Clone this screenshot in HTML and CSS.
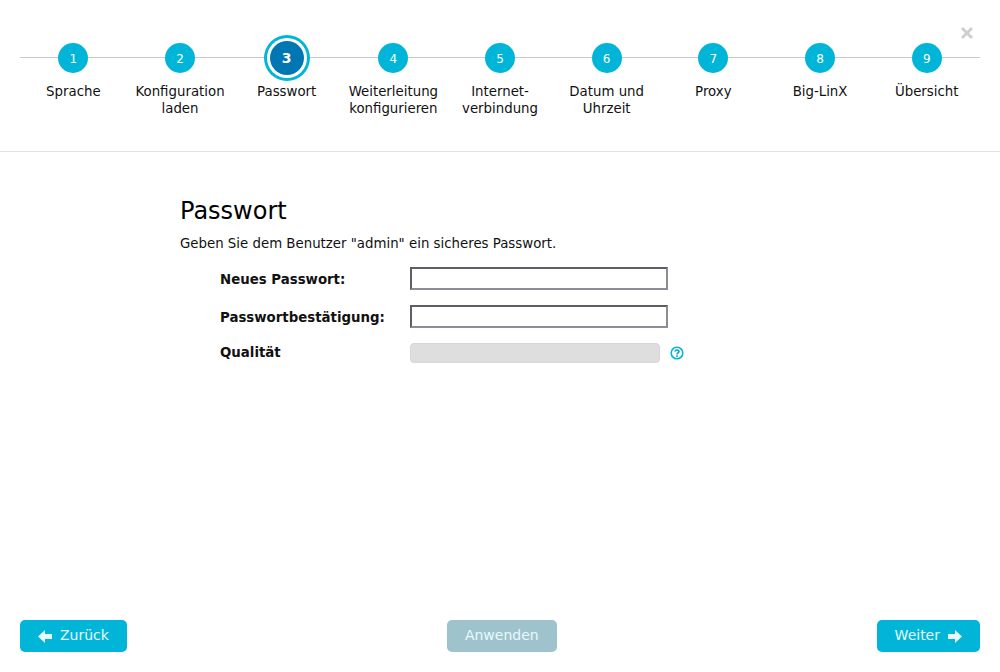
FILE: index.html
```html
<!DOCTYPE html>
<html>
<head>
    <link rel="stylesheet" href="styles.css">
</head>
<body>
    <div class="wizard">
        <div class="header">
            <span class="close">
                <svg width="14" height="14" viewBox="0 0 14 14"><path d="M2 2 L12 12 M12 2 L2 12" stroke="#cfcfcf" stroke-width="3"/></svg>
            </span>
            <div class="steps">
                <div class="step"><div class="circle">1</div><div class="label">Sprache</div></div>
                <div class="step"><div class="circle">2</div><div class="label">Konfiguration<br>laden</div></div>
                <div class="step current"><div class="circle">3</div><div class="label">Passwort</div></div>
                <div class="step"><div class="circle">4</div><div class="label">Weiterleitung<br>konfigurieren</div></div>
                <div class="step"><div class="circle">5</div><div class="label">Internet-<br>verbindung</div></div>
                <div class="step"><div class="circle">6</div><div class="label">Datum und<br>Uhrzeit</div></div>
                <div class="step"><div class="circle">7</div><div class="label">Proxy</div></div>
                <div class="step"><div class="circle">8</div><div class="label">Big-LinX</div></div>
                <div class="step"><div class="circle">9</div><div class="label">Übersicht</div></div>
            </div>
        </div>

        <div class="content">
            <h1>Passwort</h1>
            <p class="intro">Geben Sie dem Benutzer "admin" ein sicheres Passwort.</p>
            <div class="form">
                <label class="form-label">Neues Passwort:</label>
                <input class="field" type="password">
                <label class="form-label">Passwortbestätigung:</label>
                <input class="field" type="password">
                <label class="form-label quality-label">Qualität</label>
                <div class="quality">
                    <div class="quality-bar"></div>
                    <svg class="help" width="14" height="14" viewBox="0 0 14 14">
                        <circle cx="7" cy="7" r="5.8" fill="none" stroke="#00b5d8" stroke-width="1.6"/>
                        <path d="M5 5.6 C5 3.4 9 3.4 9 5.5 C9 7 7 6.8 7 8.4" fill="none" stroke="#00a5c8" stroke-width="1.6"/>
                        <rect x="6.2" y="9.3" width="1.6" height="1.6" fill="#00a5c8"/>
                    </svg>
                </div>
            </div>
        </div>

        <div class="footer">
            <button class="btn">
                <svg class="arrow" width="14" height="13" viewBox="0 0 14 13"><path d="M0 6.5 L7 0 V4 H14 V9 H7 V13 Z" fill="#e8f9fc"/></svg>
                Zurück
            </button>
            <button class="btn disabled">Anwenden</button>
            <button class="btn">
                Weiter
                <svg class="arrow" width="14" height="13" viewBox="0 0 14 13"><path d="M14 6.5 L7 0 V4 H0 V9 H7 V13 Z" fill="#e8f9fc"/></svg>
            </button>
        </div>
    </div>
</body>
</html>
```

FILE: styles.css
```css
* {
    box-sizing: border-box;
}

body {
    font-family: "DejaVu Sans", sans-serif;
    font-size: 13.33px;
    margin: 0;
    background: white;
    color: #111;
}

.wizard {
    display: flex;
    flex-direction: column;
    height: 672px;
}

.header {
    position: relative;
    height: 152px;
    padding: 43px 20px 0;
    border-bottom: 1px solid #e2e2e2;
}

.close {
    position: absolute;
    top: 26px;
    right: 26px;
    line-height: 0;
}

.steps {
    position: relative;
    display: flex;
}

.steps::before {
    content: "";
    position: absolute;
    left: 0;
    right: 0;
    top: 14px;
    height: 1px;
    background: #c8c8c8;
}

.step {
    position: relative;
    flex: 1;
    display: flex;
    flex-direction: column;
    align-items: center;
}

.circle {
    width: 30px;
    height: 30px;
    border-radius: 50%;
    background: #00b5d8;
    color: white;
    font-size: 12px;
    line-height: 33px;
    text-align: center;
}

.current .circle {
    width: 34px;
    height: 34px;
    margin: -2px 0 -2px;
    background: #0077b3;
    font-size: 14px;
    font-weight: bold;
    line-height: 34px;
    box-shadow: 0 0 0 3px white, 0 0 0 6px #00b5d8;
}

.label {
    margin-top: 10px;
    line-height: 17px;
    text-align: center;
    white-space: nowrap;
}

.content {
    flex: 1;
    padding: 0 180px;
}

h1 {
    font-size: 24px;
    font-weight: normal;
    line-height: 30px;
    margin: 44px 0 0;
    color: #000;
}

.intro {
    margin: 9px 0 0;
    line-height: 18px;
}

.form {
    display: grid;
    grid-template-columns: 190px 258px;
    grid-template-rows: 23px 23px 20px;
    row-gap: 15px;
    align-items: center;
    margin: 14px 0 0 40px;
}

.form-label {
    font-weight: bold;
    margin-top: 2px;
}

.quality-label {
    margin-top: -2px;
}

.field {
    width: 258px;
    height: 23px;
    padding: 0 4px;
    background: white;
    border: 2px solid;
    border-color: #5f5e68 #8e8c99 #8e8c99 #5f5e68;
}

.quality {
    display: flex;
    align-items: center;
    gap: 10px;
    width: 300px;
}

.quality-bar {
    width: 250px;
    height: 20px;
    border-radius: 4px;
    background: #dedede;
    border: 1px solid #d6d6d6;
}

.help {
    flex: none;
}

.footer {
    display: flex;
    justify-content: space-between;
    padding: 0 20px 20px;
}

.btn {
    display: flex;
    align-items: center;
    gap: 8px;
    height: 32px;
    padding: 0 18px 2px;
    border: none;
    border-radius: 5px;
    background: #00b5d8;
    color: #e8f9fc;
    font-family: inherit;
    font-size: 14px;
}

.arrow {
    margin-top: 2px;
}

.disabled {
    background: #9fc3cc;
}
```
